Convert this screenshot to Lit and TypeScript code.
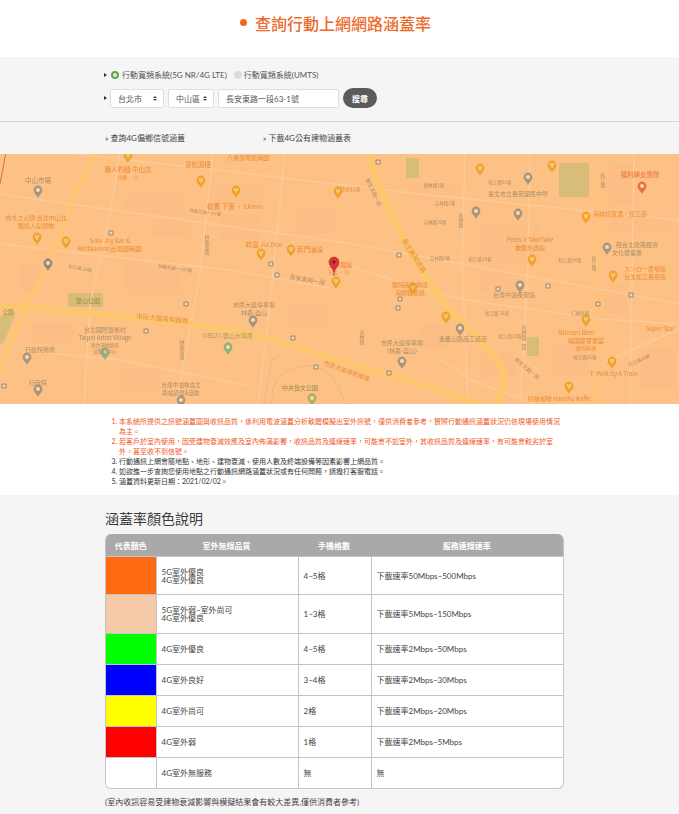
import { LitElement, html, css, svg } from "lit";
import { customElement } from "lit/decorators.js";

// map is 679 x 250, coordinates below are relative to its top left
const majorRoads: [string, number][] = [
  ["M0 153 L27 153 L133 164 L200 171 L267 184 L340 207 L382 219 L439 236 L482 252", 6],
  ["M367 -2 L382 39 L399 76 L422 119 L449 156 L479 183 L502 213 L504 229 L496 252", 7],
  ["M97 -2 L77 36 L57 89 L40 126 L27 149 L13 183 L0 219", 4],
  ["M598 -2 L596 252", 2],
];

const minorRoads = [
  "M0 40 L340 88 L600 135 L679 150",
  "M60 -2 L250 20 L420 40 L679 66",
  "M0 90 L230 116 L330 134",
  "M213 -2 L200 120 L176 252",
  "M120 -2 L110 60 L90 150 L84 252",
  "M285 -2 L270 150 L258 252",
  "M465 -2 L462 110 L468 252",
  "M530 -2 L528 110 L520 252",
  "M634 -2 L630 252",
  "M340 110 L460 145 L600 165 L679 170",
  "M440 205 L470 225 L540 252",
  "M600 210 L679 175",
  "M20 196 L120 206 L250 232",
];

// faint building blocks
const blocks = [
  [125, 40, 60, 22], [125, 110, 55, 30], [215, 30, 50, 20], [220, 60, 40, 25], [150, 65, 40, 18],
  [295, 55, 40, 25], [20, 110, 20, 28], [290, 150, 40, 22], [480, 70, 60, 40], [480, 120, 40, 18],
  [610, 10, 24, 40], [610, 60, 60, 18], [605, 130, 22, 30], [550, 190, 40, 30], [480, 200, 35, 24],
  [420, 170, 30, 24], [30, 170, 44, 20], [640, 195, 36, 40], [120, 215, 40, 25], [410, 30, 45, 16],
];

const food = "#f0a32c";
const poi = "#a89580";
const park = "#8fb07a";
const pins: [number, number, string][] = [
  [128, 3, food], [201, 28, food], [236, 38, food], [338, 39, food], [37, 85, food], [66, 89, food],
  [291, 97, food], [261, 101, food], [336, 129, food], [480, 16, food], [552, 13, food], [586, 64, food],
  [532, 107, food], [413, 135, food], [446, 164, food], [586, 167, food], [613, 123, food], [612, 209, food],
  [569, 234, food], [642, 34, "#e8703a"],
  [38, 38, poi], [48, 111, "#8f8a86"], [528, 25, poi], [476, 59, poi], [518, 61, poi], [607, 95, poi],
  [520, 133, poi], [460, 176, poi], [402, 209, poi], [253, 168, poi], [27, 205, poi], [38, 237, poi],
  [181, 248, poi], [105, 200, park], [228, 195, park], [312, 246, "#a8b060"],
];

const stops = [
  [111, 79], [186, 150], [271, 110], [277, 121], [146, 177], [293, 184], [316, 213], [4, 232],
  [378, 8], [399, 101], [400, 145], [398, 154], [389, 219], [498, 135], [548, 132], [598, 150], [631, 141],
];

type Label = [number, number, string, number, string, (number | "v")?];
const hot = "#ea8b36";
const grey = "#ab8c66";
const green = "#9a8a48";
const labels: Label[] = [
  [128, 18, "職人杓麵 中山店", 6.5, hot], [128, 25, "拉麵 · $$", 4.5, hot],
  [198, 13, "游蛇渡樓", 6.5, hot], [248, 6, "八條壽司燒烤園", 6, hot],
  [38, 29, "中山市場", 6.5, grey], [36, 66, "肉きさ火鍋 台北中山北", 6, hot], [36, 74, "路燒人氣鍋物", 6, hot],
  [110, 89, "Solo Joy Bar &", 6, hot], [110, 97, "Restaurant(台灣園時國)", 6, hot],
  [235, 55, "韓鷹 下澄 · Ekimo", 6.5, hot], [88, 149, "雙山公園", 6, green],
  [162, 167, "市民大道高架道路", 6.5, hot, 5], [105, 178, "台北國際藝術村", 6, grey],
  [105, 186, "Taipei Artist Village", 6, grey], [105, 193, "原台灣總督府", 4.6, grey], [105, 199, "員營宿中心", 4.6, grey],
  [40, 198, "行政院藥局", 6, grey], [38, 231, "行政院", 6, grey],
  [181, 233, "台灣中油林森北", 5.6, grey], [181, 241, "路站道盟&自助", 5.6, grey],
  [228, 184, "O8527-雙山大草原", 6, "#a89b50"], [254, 153, "市民大道停車場", 6, grey], [254, 161, "林森-釜山", 6, grey],
  [264, 93, "峙滋 Jia Doo", 6.5, hot], [310, 98, "新門滷達", 6.5, hot], [307, 128, "長安東路一段", 6, grey, 10],
  [340, 113, "三井韓館", 6, "#ee7c3c"], [339, 120, "日式 · $$", 4.6, "#ee7c3c"], [350, 37, "日式料理", 5, hot],
  [412, 103, "新生高架道路", 6.5, hot, 58], [410, 133, "醫院牌牛排店", 6, hot], [410, 141, "海鮮鐵板燒", 6, hot],
  [463, 187, "金星山酪品工道店", 6, grey], [402, 191, "市民大道停車場", 6, grey], [402, 199, "(林森-釜山)", 6, grey],
  [514, 143, "台灣中油長安站", 6, grey], [518, 42, "臺北市立長安國民中學", 6, grey],
  [530, 88, "Peets x TakeTake", 6, hot], [530, 96, "披薩外送館", 6, hot],
  [640, 23, "福利婦女醫院", 6.5, "#e8703a"], [620, 62, "海鮮燒蛋酒·松江店", 6, hot],
  [637, 93, "鞋台北建築經濟", 6, grey], [627, 101, "文化發事業", 6, grey],
  [645, 117, "スンロー農場館", 6, hot], [645, 125, "台北松江長安店", 6, hot],
  [576, 181, "Shiozuri Beer", 6, hot], [586, 189, "韓國麥芽豪宴", 6, hot], [586, 196, "燒肉料理", 5, hot],
  [614, 222, "F. Park by A Train", 6, hot], [559, 247, "好味咖啡 Haoshu Kaffe", 6, hot],
  [660, 177, "Super Star", 6, hot], [640, 208, "松江路48巷", 4.5, grey, -25],
  [300, 236, "中央藝文公園", 6, green], [346, 219, "市民大道高架道路", 6, hot, 20],
  [8, 160, "公園", 5.5, green],
  [205, 60, "林森北路一57巷", 4.5, grey, 8], [175, 116, "林森北路一107巷", 4.5, grey, 8], [80, 116, "松江路 20巷", 4.5, grey, 10],
  [500, 30, "松江路51巷", 4.5, grey], [480, 107, "松江路14巷", 4.5, grey], [570, 108, "松江路34巷", 4.5, grey],
  [434, 33, "新林路1巷", 4.5, grey], [445, 51, "吉林路1巷", 4.5, grey], [435, 70, "吉林路10巷", 4.5, grey],
  [440, 106, "吉林路6巷", 4.5, grey], [497, 161, "松江路 31巷", 4.5, grey], [580, 161, "仁路外巷", 4.5, grey],
  [510, 184, "松江路26巷", 4.5, grey], [585, 205, "松江路25巷", 4.5, grey],
  [372, 39, "新生北路一段", 5, grey, 65], [526, 216, "新生北路一段", 5, grey, 40],
  [207, 91, "林森北路", 5, grey, "v"], [461, 66, "吉林路", 5, grey, "v"], [594, 109, "松江路", 5, grey, "v"],
  [603, 26, "松江路", 5, grey, "v"], [524, 183, "吉林路二段", 5, grey, "v"], [182, 196, "林森南路", 5, grey, "v"],
  [362, 183, "吉林路", 5, grey, "v"],
];

const ROWS = [
  { color: "#ff6a10", q: ["5G室外優良", "4G室外優良"], bars: "4~5格", speed: "下載速率50Mbps~500Mbps", h: 38 },
  { color: "#f6c9a8", q: ["5G室外弱~室外尚可", "4G室外優良"], bars: "1~3格", speed: "下載速率5Mbps~150Mbps", h: 39 },
  { color: "#00ff00", q: ["4G室外優良"], bars: "4~5格", speed: "下載速率2Mbps~50Mbps", h: 31 },
  { color: "#0000ff", q: ["4G室外良好"], bars: "3~4格", speed: "下載速率2Mbps~30Mbps", h: 31 },
  { color: "#ffff00", q: ["4G室外尚可"], bars: "2格", speed: "下載速率2Mbps~20Mbps", h: 31 },
  { color: "#ff0000", q: ["4G室外弱"], bars: "1格", speed: "下載速率2Mbps~5Mbps", h: 31 },
  { color: "#ffffff", q: ["4G室外無服務"], bars: "無", speed: "無", h: 31 },
];

const pinPath = "M0 0 C-1.2 -3 -4.4 -4.6 -4.4 -8 A4.4 4.4 0 1 1 4.4 -8 C4.4 -4.6 1.2 -3 0 0 Z";

@customElement("app-root")
export class AppRoot extends LitElement {
  static styles = css`
    :host {
      display: block;
      width: 679px;
      background: #fff;
      font-family: "Lato", "Noto Sans CJK TC", sans-serif;
      color: #333;
    }
    .title {
      height: 57px;
      display: flex;
      align-items: center;
      justify-content: center;
      gap: 8px;
      color: #ec6a2c;
      font-size: 16px;
      font-weight: 500;
      box-sizing: border-box;
      padding: 0 8px 12px 0;
    }
    .title i {
      width: 7px;
      height: 7px;
      border-radius: 50%;
      background: #ec6a1c;
    }
    .search {
      background: #f5f5f5;
      border-bottom: 1px solid #d6d6d6;
      padding: 10px 0 0 104px;
      box-sizing: border-box;
      height: 65px;
    }
    .line {
      display: flex;
      align-items: center;
      font-size: 8px;
      color: #555;
    }
    .mark {
      width: 0;
      height: 0;
      border-left: 3px solid #333;
      border-top: 2.5px solid transparent;
      border-bottom: 2.5px solid transparent;
      margin-right: 3px;
    }
    .radios {
      height: 15px;
    }
    .radio {
      width: 8px;
      height: 8px;
      border-radius: 50%;
      margin-right: 3px;
      box-sizing: border-box;
    }
    .radio.on {
      border: 2px solid #5dab4e;
      background: #dfeedb;
      margin-left: 1px;
    }
    .radio.off {
      background: #dcdcdc;
      margin-left: 7px;
      margin-right: 2px;
    }
    .fields {
      margin-top: 6px;
      height: 20px;
    }
    .box {
      height: 19px;
      background: #fff;
      border: 1px solid #dedede;
      box-sizing: border-box;
      display: flex;
      align-items: center;
      justify-content: space-between;
      padding: 0 6px 0 7px;
      font-size: 8px;
      color: #555;
      border-radius: 2px;
    }
    .city {
      width: 54px;
      margin-right: 4px;
    }
    .dist {
      width: 46px;
      margin-right: 4px;
    }
    .addr {
      width: 121px;
      margin-right: 4px;
      justify-content: flex-start;
    }
    .updown {
      display: flex;
      flex-direction: column;
      gap: 1px;
    }
    .updown b {
      width: 0;
      height: 0;
      border-left: 2px solid transparent;
      border-right: 2px solid transparent;
    }
    .updown b:first-child {
      border-bottom: 2px solid #444;
    }
    .updown b:last-child {
      border-top: 2px solid #444;
    }
    .go {
      width: 34px;
      height: 20px;
      border-radius: 10px;
      background: #5b5b5b;
      color: #fff;
      font-size: 8px;
      font-weight: 700;
      display: flex;
      align-items: center;
      justify-content: center;
    }
    .links {
      height: 32px;
      background: #f5f5f5;
      display: flex;
      align-items: center;
      padding: 0 0 2px 105px;
      font-size: 8px;
      color: #444;
      box-sizing: border-box;
    }
    .links span:first-child {
      width: 158px;
    }
    .map {
      display: block;
      width: 679px;
      height: 250px;
      filter: blur(0.35px);
    }
    .notes {
      margin: 0;
      padding: 12px 115px 0 119px;
      height: 91px;
      box-sizing: border-box;
      font-size: 7px;
      line-height: 10px;
      color: #333;
      background: #fff;
    }
    .notes li.warn {
      color: #ee5a26;
    }
    .legend {
      background: #f5f5f5;
      padding: 14px 115px 0 105px;
      height: 319px;
      box-sizing: border-box;
    }
    h2 {
      margin: 0 0 5px;
      font-size: 14px;
      line-height: 20px;
      font-weight: 400;
      color: #3a3a3a;
    }
    .table {
      border: 1px solid #c4c4c4;
      border-top: 0;
      border-radius: 6px;
      overflow: hidden;
      background: #fff;
      font-size: 8px;
      color: #444;
    }
    .row {
      display: grid;
      grid-template-columns: 49.5px 142px 73px 1fr;
      border-top: 1px solid #c4c4c4;
      box-sizing: border-box;
    }
    .row.head {
      border-top: 0;
      height: 22px;
      background: #a9a9a9;
      color: #fff;
      font-weight: 700;
      align-items: center;
      text-align: center;
    }
    .cell {
      border-left: 1px solid #c4c4c4;
      padding-left: 5px;
      display: flex;
      flex-direction: column;
      justify-content: center;
      line-height: 8px;
    }
    .cell span {
      display: block;
      height: 8px;
    }
    .swatch {
      border: 0;
      padding: 0;
    }
    .foot {
      margin-top: 7px;
      font-size: 8px;
      line-height: 12px;
      color: #444;
    }
  `;

  private renderLabel([x, y, t, s, c, turn]: Label) {
    if (turn === "v") {
      return svg`<text x=${x} y=${y} font-size=${s} fill=${c} writing-mode="vertical-rl">${t}</text>`;
    }
    return svg`<text x=${x} y=${y} font-size=${s} fill=${c} transform=${turn ? `rotate(${turn} ${x} ${y})` : ""}>${t}</text>`;
  }

  private renderMap() {
    return html`<svg class="map" viewBox="0 0 679 250" font-family="'Noto Sans CJK TC', sans-serif">
      <rect width="679" height="250" fill="#fdc186"></rect>
      <g fill="#fcbe84">
        ${blocks.map(([x, y, w, h]) => svg`<rect x=${x} y=${y} width=${w} height=${h}></rect>`)}
      </g>
      <g fill="#d8bd78">
        <rect x="68" y="139" width="35" height="14"></rect>
        <rect x="406" y="4" width="13" height="20"></rect>
        <rect x="559" y="9" width="30" height="34"></rect>
        <rect x="527" y="183" width="12" height="19"></rect>
        <path d="M0 162 L16 158 L5 186 L0 192 Z"></path>
      </g>
      <g fill="none" stroke="#fdcb97" stroke-width="1.5">
        ${minorRoads.map((d) => svg`<path d=${d}></path>`)}
      </g>
      <g fill="none" stroke="#fdc76f" stroke-linejoin="round">
        ${majorRoads.map(([d, w]) => svg`<path d=${d} stroke-width=${w}></path>`)}
      </g>
      <path d="M6 -2 L0 30" stroke="#e0683c" stroke-width="1" fill="none"></path>
      <path d="M264 250 L272 205 L282 200 M272 250 Q270 214 306 212 Q330 212 340 236 L345 250" stroke="#c9a878" stroke-width=".6" stroke-dasharray="2 1" fill="none"></path>
      ${stops.map(
        ([x, y]) => svg`<g transform=${`translate(${x} ${y})`}>
          <rect x="-2.5" y="-2.5" width="5" height="5" rx="1" fill="#9c8c76"></rect>
          <rect x="-1.4" y="-1.4" width="2.8" height="2.8" fill="#fcd6ac"></rect>
        </g>`
      )}
      ${pins.map(
        ([x, y, c]) => svg`<g transform=${`translate(${x} ${y + 6})`}>
          <path d=${pinPath} fill=${c}></path>
          ${c === food
            ? svg`<path d="M-1.6 -10 V-8 Q-1.6 -7 0 -7 Q1.6 -7 1.6 -8 V-10 M0 -10 V-5" stroke="#fcdca8" stroke-width=".8" fill="none"></path>`
            : svg`<circle cy="-8" r="2" fill="#fcd9a8"></circle>`}
        </g>`
      )}
      <g text-anchor="middle">${labels.map((l) => this.renderLabel(l))}</g>
      <g transform="translate(334 124)">
        <path d="M0 -2 L0 -8" stroke="#8a5a40" stroke-width="1"></path>
        <path d="M0 -6 C-1.4 -10 -5 -12 -5 -16 A5 5 0 1 1 5 -16 C5 -12 1.4 -10 0 -6 Z" fill="#d8333a" stroke="#b3272d" stroke-width=".5"></path>
        <circle cy="-16" r="1.6" fill="#7a1a1e"></circle>
      </g>
    </svg>`;
  }

  render() {
    return html`
      <div class="title"><i></i><span>查詢行動上網網路涵蓋率</span></div>
      <div class="search">
        <div class="line radios">
          <span class="mark"></span>
          <span class="radio on"></span>
          <span>行動寬頻系統(5G NR/4G LTE)</span>
          <span class="radio off"></span>
          <span>行動寬頻系統(UMTS)</span>
        </div>
        <div class="line fields">
          <span class="mark"></span>
          <div class="box city">台北市 <span class="updown"><b></b><b></b></span></div>
          <div class="box dist">中山區 <span class="updown"><b></b><b></b></span></div>
          <div class="box addr">長安東路一段63-1號</div>
          <div class="go">搜尋</div>
        </div>
      </div>
      <div class="links">
        <span>» 查詢4G偏鄉信號涵蓋</span>
        <span>» 下載4G公有建物涵蓋表</span>
      </div>
      ${this.renderMap()}
      <ol class="notes">
        <li class="warn">本系統所提供之訊號涵蓋圖與收訊品質，係利用電波涵蓋分析軟體模擬出室外訊號，僅供消費者參考，實際行動通訊涵蓋狀況仍依現場使用情況為主。</li>
        <li class="warn">若客戶於室內使用，因受建物衰減效應及室內佈滿影響，收訊品質及連線速率，可能會不如室外，其收訊品質及連線速率，有可能會較劣於室外，甚至收不到信號。</li>
        <li>行動通訊上網會隨地點、地形、建物衰減、使用人數及終端設備等因素影響上網品質。</li>
        <li>如欲進一步查詢您使用地點之行動通訊網路涵蓋狀況或有任何問題，請撥打客服電話。</li>
        <li>涵蓋資料更新日期：2021/02/02。</li>
      </ol>
      <div class="legend">
        <h2>涵蓋率顏色說明</h2>
        <div class="table">
          <div class="row head">
            <span>代表顏色</span><span>室外無線品質</span><span>手機格數</span><span>服務連線速率</span>
          </div>
          ${ROWS.map(
            (r) => html`<div class="row" style="height:${r.h}px">
              <div class="swatch" style="background:${r.color}"></div>
              <div class="cell">${r.q.map((t) => html`<span>${t}</span>`)}</div>
              <div class="cell">${r.bars}</div>
              <div class="cell">${r.speed}</div>
            </div>`
          )}
        </div>
        <div class="foot">(室內收訊容易受建物衰減影響與模擬結果會有較大差異,僅供消費者參考)</div>
      </div>
    `;
  }
}
